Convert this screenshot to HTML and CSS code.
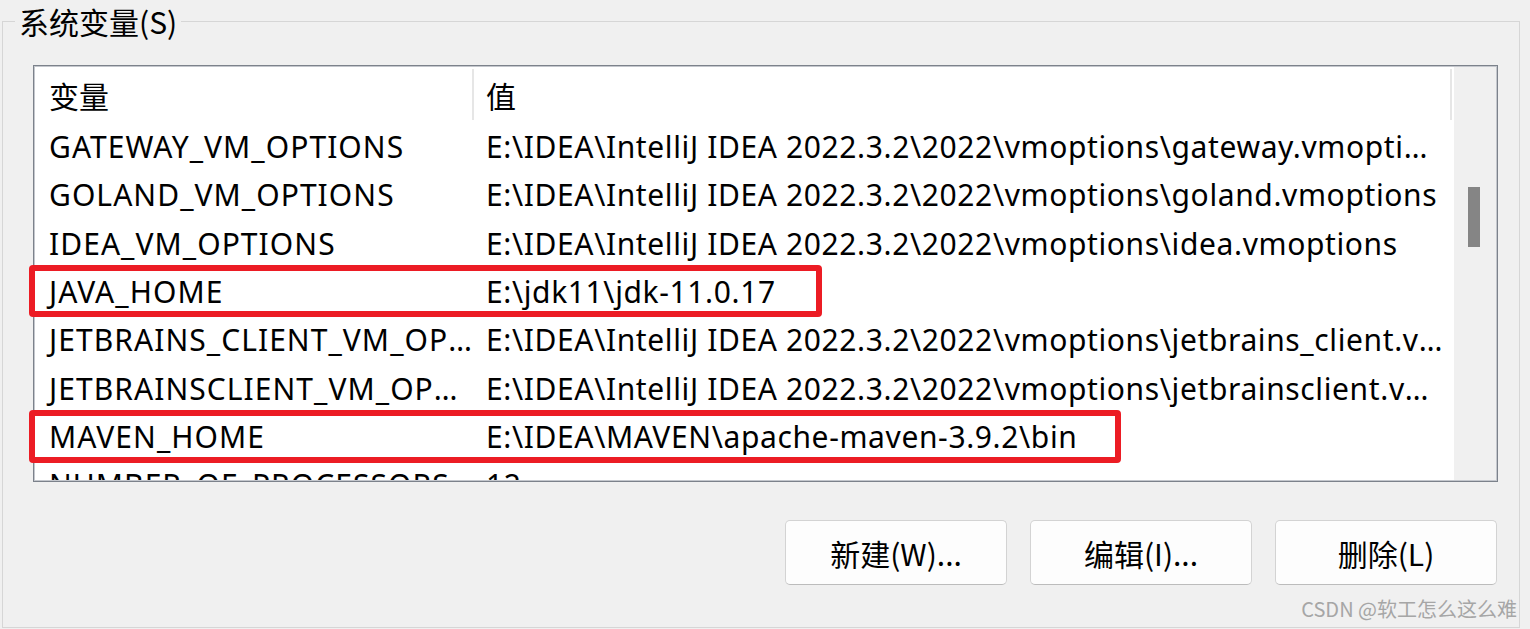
FILE: index.html
```html
<!DOCTYPE html>
<html lang="zh-CN">
<head>
<meta charset="utf-8">
<title>系统变量</title>
<link rel="stylesheet" href="styles.css">
</head>
<body>
<fieldset class="group">
  <legend class="group-label">系统变量(S)</legend>
  <div class="listbox">
    <div class="viewport">
      <div class="header">
        <div class="hcell">变量</div>
        <div class="hcell hcell-value">值</div>
      </div>
      <div class="row"><div class="cell name">GATEWAY_VM_OPTIONS</div><div class="cell value">E:\IDEA\IntelliJ IDEA 2022.3.2\2022\vmoptions\gateway.vmoptions</div></div>
      <div class="row"><div class="cell name">GOLAND_VM_OPTIONS</div><div class="cell value">E:\IDEA\IntelliJ IDEA 2022.3.2\2022\vmoptions\goland.vmoptions</div></div>
      <div class="row"><div class="cell name">IDEA_VM_OPTIONS</div><div class="cell value">E:\IDEA\IntelliJ IDEA 2022.3.2\2022\vmoptions\idea.vmoptions</div></div>
      <div class="row"><div class="cell name">JAVA_HOME</div><div class="cell value">E:\jdk11\jdk-11.0.17</div></div>
      <div class="row"><div class="cell name">JETBRAINS_CLIENT_VM_OPTIONS</div><div class="cell value">E:\IDEA\IntelliJ IDEA 2022.3.2\2022\vmoptions\jetbrains_client.vmoptions</div></div>
      <div class="row"><div class="cell name">JETBRAINSCLIENT_VM_OPTIONS</div><div class="cell value">E:\IDEA\IntelliJ IDEA 2022.3.2\2022\vmoptions\jetbrainsclient.vmoptions</div></div>
      <div class="row"><div class="cell name">MAVEN_HOME</div><div class="cell value">E:\IDEA\MAVEN\apache-maven-3.9.2\bin</div></div>
      <div class="row"><div class="cell name">NUMBER_OF_PROCESSORS</div><div class="cell value">12</div></div>
    </div>
    <div class="scrollbar"><div class="thumb"></div></div>
    <div class="mark mark-java"></div>
    <div class="mark mark-maven"></div>
  </div>
  <div class="buttons">
    <button class="btn" type="button">新建(W)...</button>
    <button class="btn" type="button">编辑(I)...</button>
    <button class="btn" type="button">删除(L)</button>
  </div>
  <div class="watermark">CSDN @软工怎么这么难</div>
</fieldset>
</body>
</html>
```
FILE: styles.css
```css
html, body {
  margin: 0;
  padding: 0;
}
body {
  width: 1530px;
  height: 629px;
  overflow: hidden;
  background: #f0f0f0;
  color: #000;
  font-family: "Noto Sans", "Noto Sans CJK SC", sans-serif;
}
.group {
  box-sizing: border-box;
  margin: 6px 0 0 2px;
  padding: 0;
  width: 1518px;
  height: 622px;
  border: 1px solid #d6d6d6;
  min-inline-size: 0;
}
.group-label {
  margin-left: 12px;
  padding: 0 4px;
  font-size: 30px;
  line-height: 30px;
  font-family: "Noto Sans CJK SC", sans-serif;
  color: #000;
}
.listbox {
  position: relative;
  box-sizing: border-box;
  display: flex;
  margin: 29px 21px 0 30px;
  height: 417px;
  border: 1px solid #7c828b;
  box-shadow: inset 0 0 0 1px #c4c7cd;
  padding: 1px;
}
.viewport {
  flex: 1;
  overflow: hidden;
  background: #fff;
}
.scrollbar {
  box-sizing: border-box;
  width: 42px;
  flex: none;
  background: #f0f0f0;
  padding: 120px 0 0 14px;
}
.thumb {
  width: 12px;
  height: 60px;
  background: #858585;
}
.header {
  display: grid;
  grid-template-columns: 439px 978px;
  height: 56px;
}
.hcell {
  box-sizing: border-box;
  height: 51px;
  margin-top: 2px;
  border-right: 2px solid #e6e6e6;
  padding-left: 14px;
  display: flex;
  align-items: center;
  font-family: "Noto Sans CJK SC", sans-serif;
  font-size: 30px;
}
.hcell-value {
  padding-left: 12px;
}
.row {
  display: grid;
  grid-template-columns: 439px 978px;
  height: 48.3px;
  align-items: center;
  font-size: 30px;
  line-height: 40px;
}
.cell {
  white-space: nowrap;
  overflow: hidden;
  text-overflow: ellipsis;
}
.name {
  padding: 0 0 0 14px;
  letter-spacing: 1.05px;
}
.value {
  padding: 0 8px 0 12px;
  letter-spacing: 0.62px;
}
.mark {
  position: absolute;
  left: -5px;
  box-sizing: border-box;
  border: 6px solid #ec1c24;
  border-radius: 4px;
}
.mark-java {
  top: 199px;
  width: 793px;
  height: 52px;
}
.mark-maven {
  top: 344px;
  width: 1092px;
  height: 53px;
}
.buttons {
  display: flex;
  justify-content: flex-end;
  gap: 23px;
  margin: 38px 22px 0 0;
}
.btn {
  box-sizing: border-box;
  width: 222px;
  height: 65px;
  background: #fdfdfd;
  border: 1px solid #d3d3d3;
  border-bottom-color: #bcbcbc;
  border-radius: 5px;
  font-family: "Noto Sans CJK SC", sans-serif;
  font-size: 30px;
  color: #000;
  padding: 0;
}
.watermark {
  margin: 13px 2px 0 0;
  text-align: right;
  font-size: 20px;
  line-height: 22px;
  color: #a6a6a6;
  font-family: "Noto Sans CJK SC", sans-serif;
}
```
